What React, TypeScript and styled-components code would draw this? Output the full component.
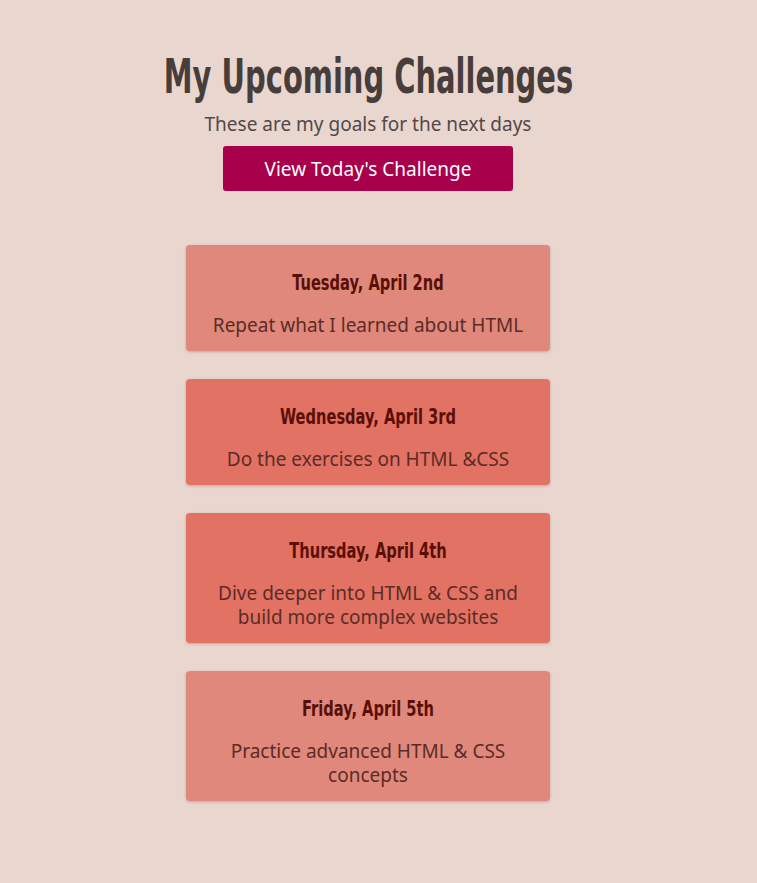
import React from "react";
import styled, { createGlobalStyle } from "styled-components";

const Global = createGlobalStyle`
  html, body { margin: 0; padding: 0; background: #e9d6cf; }
  body { font-family: "Noto Sans", "Open Sans", sans-serif; }
`;

const Page = styled.div`
  width: 736px;
  padding: 48px 0 60px;
  display: flex;
  flex-direction: column;
  align-items: center;
`;

const Title = styled.h1`
  margin: 0;
  font-family: "DejaVu Sans Condensed", "DejaVu Sans", sans-serif;
  font-weight: 700;
  font-size: 48px;
  line-height: 56px;
  color: #473d3b;
  white-space: nowrap;
  transform: scaleX(0.67);
`;

const Subtitle = styled.p`
  margin: 6px 0 0;
  font-size: 19px;
  line-height: 28px;
  color: #524848;
`;

const Button = styled.button`
  margin-top: 8px;
  width: 290px;
  height: 45px;
  border: none;
  border-radius: 3px;
  background: #a8004a;
  color: #fff;
  font-family: "Noto Sans", sans-serif;
  font-size: 19px;
  cursor: pointer;
`;

const List = styled.div`
  margin-top: 54px;
  display: flex;
  flex-direction: column;
  gap: 28px;
  width: 364px;
`;

const Card = styled.div<{ $tone: "light" | "dark" }>`
  background: ${(p) => (p.$tone === "light" ? "#df887b" : "#e27264")};
  border-radius: 4px;
  box-shadow: 0 1px 3px rgba(80, 30, 20, 0.25);
  padding: 24px 20px 14px;
  text-align: center;
`;

const CardTitle = styled.h2`
  margin: 0;
  font-family: "DejaVu Sans Condensed", "DejaVu Sans", sans-serif;
  font-weight: 700;
  font-size: 22px;
  line-height: 28px;
  color: #5a0f06;
  transform: scaleX(0.74);
`;

const CardText = styled.p`
  margin: 16px 0 0;
  font-size: 19px;
  line-height: 24px;
  color: #5c2b26;
`;

const items: { date: string; text: string; tone: "light" | "dark" }[] = [
  { date: "Tuesday, April 2nd", text: "Repeat what I learned about HTML", tone: "light" },
  { date: "Wednesday, April 3rd", text: "Do the exercises on HTML &CSS", tone: "dark" },
  { date: "Thursday, April 4th", text: "Dive deeper into HTML & CSS and build more complex websites", tone: "dark" },
  { date: "Friday, April 5th", text: "Practice advanced HTML & CSS concepts", tone: "light" },
];

export default function App() {
  return (
    <>
      <Global />
      <Page>
        <Title>My Upcoming Challenges</Title>
        <Subtitle>These are my goals for the next days</Subtitle>
        <Button>View Today's Challenge</Button>
        <List>
          {items.map((it) => (
            <Card key={it.date} $tone={it.tone}>
              <CardTitle>{it.date}</CardTitle>
              <CardText>{it.text}</CardText>
            </Card>
          ))}
        </List>
      </Page>
    </>
  );
}
